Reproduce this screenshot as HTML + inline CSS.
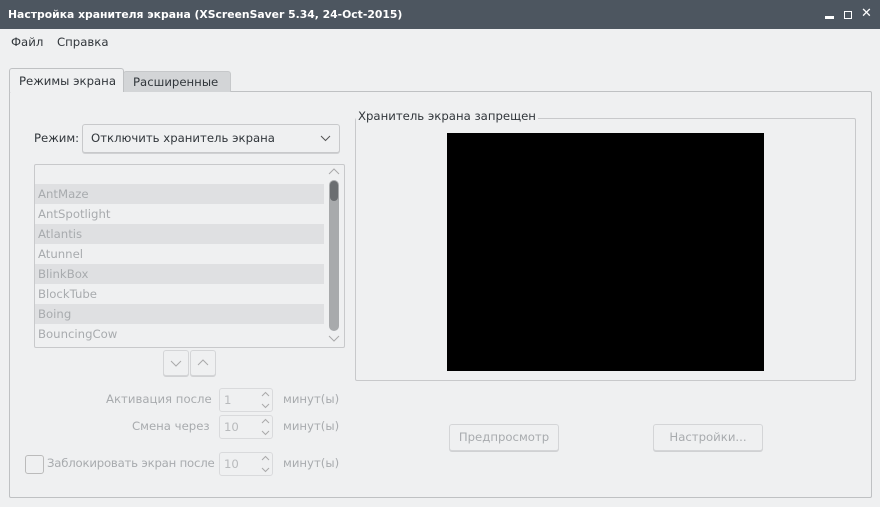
<!DOCTYPE html>
<html><head><meta charset="utf-8"><style>
*{box-sizing:border-box;margin:0;padding:0}
body{width:880px;height:507px;background:#eff0f1;font-family:"DejaVu Sans","Liberation Sans",sans-serif;font-size:11.7px;color:#31363b;position:relative;overflow:hidden}
.a{position:absolute}
.title{left:0;top:0;width:880px;height:29px;background:#4d5660;color:#fff;font-weight:bold;font-size:10.8px;line-height:29px;padding-left:8px}
.dis{color:#a8abae}
.btn{border:1px solid #d4d5d7;border-radius:3px;background:#eff0f1;box-shadow:0 1px 0 #d0d1d3;text-align:center;color:#a8abae}
.spin{border:1px solid #d9dadc;border-radius:3px;width:54px;height:24px;color:#b8babc;line-height:22px;padding-left:4px}
.spin svg{position:absolute;right:2px;top:2px}
.row{left:35px;width:289px;height:20px;line-height:20px;padding-left:3px;color:#a8abae}
.odd{background:#dfe0e2}
</style></head><body>
<div class="a title">Настройка хранителя экрана  (XScreenSaver 5.34, 24-Oct-2015)</div>
<div class="a" style="left:825px;top:16px;width:9px;height:3px;background:#fff"></div>
<div class="a" style="left:844px;top:11px;width:8px;height:8px;border:2px solid #fff;border-top-width:2px;border-width:1.5px 1.5px 1.5px 1.5px"></div>
<div class="a" style="left:861px;top:6px;color:#fff;font-weight:bold;font-size:13px">✕</div>
<div class="a" style="left:11px;top:35px">Файл</div>
<div class="a" style="left:57px;top:35px">Справка</div>
<div class="a" style="left:9px;top:91px;width:863px;height:407px;border:1px solid #bfc1c3;border-radius:2px"></div>
<div class="a" style="left:123px;top:71px;width:108px;height:21px;background:#d3d5d7;border:1px solid #c6c8ca;border-bottom:none;border-radius:3px 3px 0 0;padding:3px 0 0 9px">Расширенные</div>
<div class="a" style="left:9px;top:68px;width:115px;height:24px;background:#eff0f1;border:1px solid #bfc1c3;border-bottom:none;border-radius:3px 3px 0 0;padding:5px 0 0 9px">Режимы экрана</div>
<div class="a" style="left:34px;top:131px">Режим:</div>
<div class="a btn" style="left:82px;top:124px;width:258px;height:29px;color:#31363b;text-align:left;padding:6px 0 0 8px;border-color:#c8c9cb">Отключить хранитель экрана<svg class="a" style="left:237px;top:10px" width="11" height="7"><path d="M1 1l4.5 4.5L10 1" stroke="#555" fill="none"/></svg></div>
<div class="a" style="left:34px;top:164px;width:311px;height:184px;border:1px solid #c8c9cb;border-radius:2px;background:#eff0f1"></div>
<div class="a row odd" style="top:184px">AntMaze</div>
<div class="a row" style="top:204px">AntSpotlight</div>
<div class="a row odd" style="top:224px">Atlantis</div>
<div class="a row" style="top:244px">Atunnel</div>
<div class="a row odd" style="top:264px">BlinkBox</div>
<div class="a row" style="top:284px">BlockTube</div>
<div class="a row odd" style="top:304px">Boing</div>
<div class="a row" style="top:324px;height:20px">BouncingCow</div>
<div class="a" style="left:329px;top:180px;width:10px;height:151px;background:#a0a2a4;border-radius:5px;opacity:.9"></div>
<div class="a" style="left:330px;top:181px;width:8px;height:20px;background:#6b6e71;border-radius:4px"></div>
<svg class="a" style="left:328px;top:168px" width="12" height="8"><path d="M1 6l5-5 5 5" stroke="#aaa" fill="none"/></svg>
<svg class="a" style="left:328px;top:335px" width="12" height="8"><path d="M1 1l5 5 5-5" stroke="#aaa" fill="none"/></svg>
<div class="a btn" style="left:163px;top:350px;width:26px;height:26px"><svg width="14" height="24"><path d="M2 10l5 5 5-5" stroke="#aaa" fill="none"/></svg></div>
<div class="a btn" style="left:190px;top:350px;width:26px;height:26px"><svg width="14" height="24"><path d="M2 14l5-5 5 5" stroke="#aaa" fill="none"/></svg></div>
<div class="a dis" style="left:106px;top:392px">Активация после</div>
<div class="a dis" style="left:132px;top:419px">Смена через</div>
<div class="a" style="left:25px;top:455px;width:19px;height:19px;border:1px solid #bbb;border-radius:3px"></div>
<div class="a dis" style="left:47px;top:456px;letter-spacing:-0.2px">Заблокировать экран после</div>
<div class="a spin" style="left:219px;top:388px">1<svg width="9" height="18"><path d="M1 5l3.5-3.5L8 5M1 13l3.5 3.5L8 13" stroke="#aaa" fill="none"/></svg></div>
<div class="a spin" style="left:219px;top:415px">10<svg width="9" height="18"><path d="M1 5l3.5-3.5L8 5M1 13l3.5 3.5L8 13" stroke="#aaa" fill="none"/></svg></div>
<div class="a spin" style="left:219px;top:452px">10<svg width="9" height="18"><path d="M1 5l3.5-3.5L8 5M1 13l3.5 3.5L8 13" stroke="#aaa" fill="none"/></svg></div>
<div class="a dis" style="left:283px;top:392px">минут(ы)</div>
<div class="a dis" style="left:283px;top:419px">минут(ы)</div>
<div class="a dis" style="left:283px;top:456px">минут(ы)</div>
<div class="a" style="left:355px;top:118px;width:501px;height:263px;border:1px solid #c8c9cb;border-radius:2px"></div>
<div class="a" style="left:356px;top:109px;background:#eff0f1;padding:0 2px">Хранитель экрана запрещен</div>
<div class="a" style="left:447px;top:133px;width:317px;height:238px;background:#000"></div>
<div class="a btn" style="left:449px;top:424px;width:110px;height:27px;line-height:25px">Предпросмотр</div>
<div class="a btn" style="left:653px;top:424px;width:110px;height:27px;line-height:25px">Настройки...</div>
</body></html>
